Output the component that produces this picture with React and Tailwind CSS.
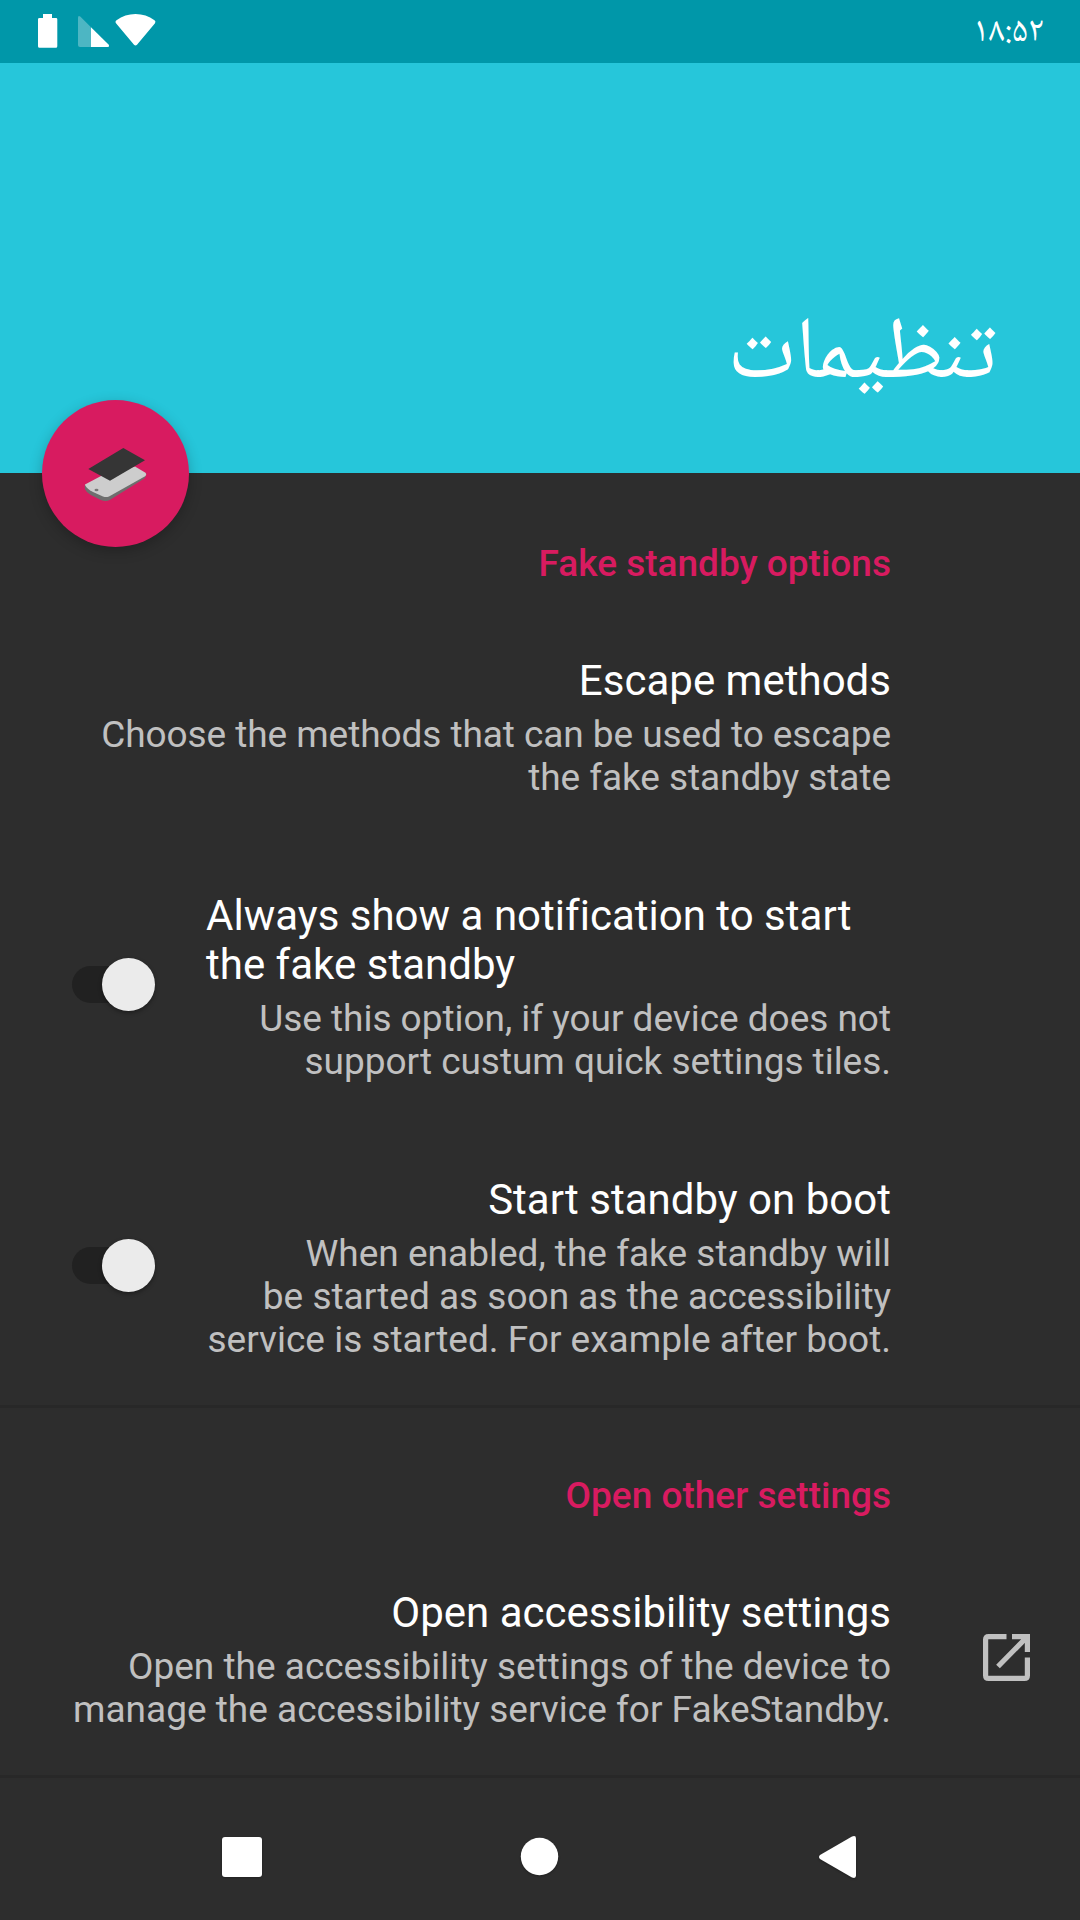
const ROBOTO = "font-['Roboto','Noto_Sans',sans-serif]";

function StatusBar() {
  return (
    <div className="flex h-[63px] items-center justify-between bg-[#0097a9] pl-[38px] pr-[36px]">
      <svg className="h-[63px] w-[124px]" viewBox="38 0 124 63" fill="#fff">
        <path d="M43 14h9v4h4q1.300 0 1.300 1.300v27q0 1.500-1.500 1.500H39.500q-1.500 0-1.500-1.500v-27Q38 18 39.500 18H43z" />
        <path d="M78 18q0-3.500 2.500-1.200L91 27.300V47H80q-2 0-2-2z" fillOpacity=".3" />
        <path d="M91 27.300l17.500 17.200q1.500 2.500-1 2.500H91z" />
        <path d="M115.500 22q0-1 1-1.700Q125 14 135.500 14t19 6.300q1.600 1.200.5 2.900l-18 21.500q-1.500 1.600-3 0l-18-21.500q-.5-.6-.5-1.200z" />
      </svg>
      <span dir="ltr" className="inline-block pt-[5px] font-['Noto_Naskh_Arabic','DejaVu_Sans',sans-serif] text-[35.5px] leading-none text-white">۱۸:۵۲</span>
    </div>
  );
}

function StandbyButton() {
  return (
    <div className="absolute left-[42px] top-[400px] z-10 size-[147px] rounded-full bg-[#d81b60] shadow-[0_4px_14px_rgba(0,0,0,0.24)]">
      <svg className="size-full" viewBox="42 400 147 147">
        <path d="M84.800 485v4q1.500 3.500 6 6l10 5q5 2 9 0l34.500-21.500q2-1.500 2-5.500z" fill="#6e6e6e" />
        <path d="M85 484.500L101 476l34-9.500 10.500 6.300q1.500 1.500 0 3.200l-36.500 20.500q-3 1.200-6 0l-10-4.500q-6-3-8-7z" fill="#cdcdcd" />
        <path d="M88.300 469l35-21 21.700 12.300-35 20.400z" fill="#353535" />
        <ellipse cx="96.500" cy="490" rx="2" ry="1.200" fill="#777" />
      </svg>
    </div>
  );
}

function Heading({ children, className }) {
  return <h2 className={`h-[43px] pr-[189px] text-right text-[37px] font-medium leading-[43px] text-[#d81b60] ${className}`}>{children}</h2>;
}

function Switch() {
  return (
    <div className="relative mb-[5px] ml-[72px] h-[53px] w-[83px] shrink-0">
      <div className="absolute left-0 top-[8px] h-[37px] w-[75px] rounded-full bg-[#212121]" />
      <div className="absolute right-0 top-0 size-[53px] rounded-full bg-[#ebebeb] shadow-[0_2px_4px_rgba(0,0,0,0.35)]" />
    </div>
  );
}

function Preference({ title, summary, control, className = "", titleAlign = "text-right", summaryTracking = "" }) {
  return (
    <div className={`flex items-center pr-[189px] ${className}`}>
      {control}
      <div className="ml-auto w-[685px] whitespace-nowrap">
        <div className={`text-[42px] leading-[49px] tracking-[0.015px] text-white ${titleAlign}`}>
          {title.map((line) => <p key={line}>{line}</p>)}
        </div>
        <div className={`mt-[8px] flex flex-col items-end text-[37px] leading-[43px] text-[#c0c0c0] ${summaryTracking}`}>
          {summary.map((line) => <p key={line}>{line}</p>)}
        </div>
      </div>
    </div>
  );
}

function OpenIcon() {
  return (
    <svg className="absolute right-[50px] top-[46px] size-[47px]" viewBox="0 0 47 47" fill="none" stroke="#c0c0c0" strokeWidth="5.200">
      <path d="M23.500 2.600H5.600q-3 0-3 3v35.800q0 3 3 3h35.800q3 0 3-3V23.500M29 2.600h15.400V18M44 3L15 32.500" />
    </svg>
  );
}

export default function App() {
  return (
    <div className={`relative flex h-[1920px] w-[1080px] flex-col overflow-hidden bg-[#2d2d2d] ${ROBOTO}`}>
      <StatusBar />
      <header className="flex h-[410px] items-end justify-end bg-[#26c6da] pb-[70px] pr-[83px]">
        <h1 dir="rtl" className="inline-block font-['Noto_Naskh_Arabic','DejaVu_Sans',sans-serif] text-[88px] leading-[90px] text-white">تنظیمات</h1>
      </header>
      <StandbyButton />
      <main>
        <Heading className="mt-[69px]">Fake standby options</Heading>
        <Preference
          className="mt-[71px]"
          summaryTracking="tracking-[-0.07px]"
          title={["Escape methods"]}
          summary={["Choose the methods that can be used to escape", "the fake standby state"]}
        />
        <Preference
          className="mt-[92px]"
          titleAlign="text-left"
          summaryTracking="tracking-[-0.03px]"
          control={<Switch />}
          title={["Always show a notification to start", "the fake standby"]}
          summary={["Use this option, if your device does not", "support custum quick settings tiles."]}
        />
        <Preference
          className="mt-[92px]"
          control={<Switch />}
          title={["Start standby on boot"]}
          summary={["When enabled, the fake standby will", "be started as soon as the accessibility", "service is started. For example after boot."]}
        />
        <div className="mt-[44px] h-[3px] bg-[#282828]" />
        <Heading className="mt-[66px]">Open other settings</Heading>
        <div className="relative mt-[71px]">
          <Preference title={["Open accessibility settings"]} summary={["Open the accessibility settings of the device to", "manage the accessibility service for FakeStandby."]} />
          <OpenIcon />
        </div>
        <div className="mt-[44px] h-[3px] bg-[#282828]" />
      </main>
      <nav className="mt-auto h-[142px]">
        <svg className="h-[142px] w-full drop-shadow-[0_1px_1px_rgba(0,0,0,0.3)]" viewBox="0 1778 1080 142" fill="#fff">
          <rect x="222" y="1837" width="40" height="40" rx="3" />
          <circle cx="539.500" cy="1856.500" r="18.700" />
          <path d="M820 1855l32-18.500q4-1.500 4 2v37q0 3.500-4 2l-32-18.500q-2-2 0-4z" />
        </svg>
      </nav>
    </div>
  );
}
